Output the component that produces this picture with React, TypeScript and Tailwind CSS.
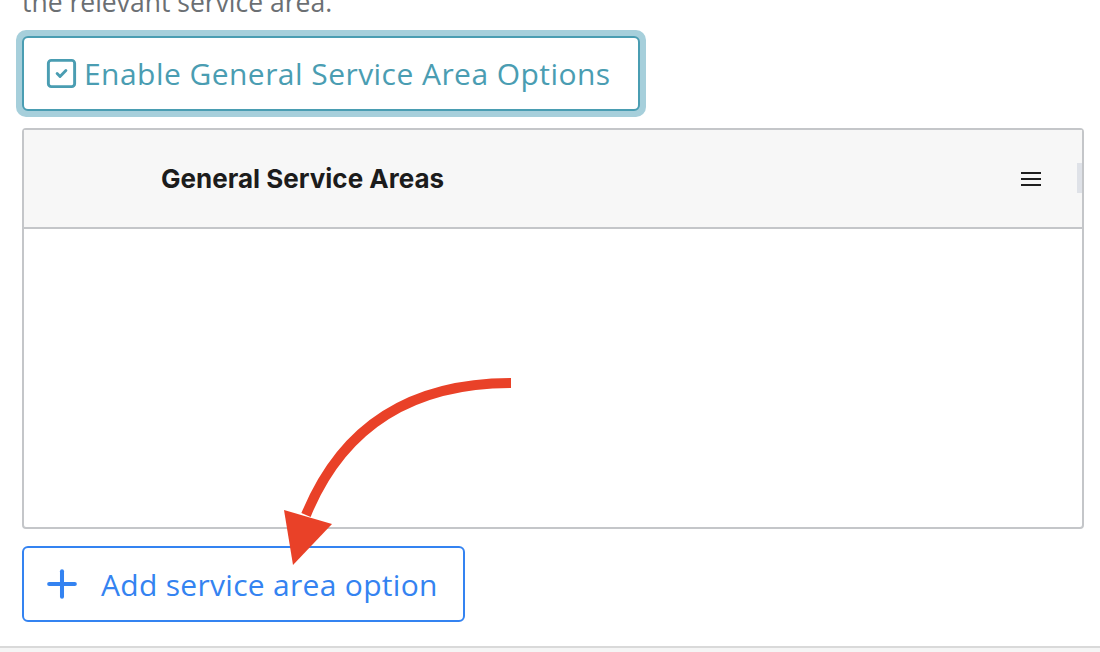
import { Plus, SquareCheck } from 'lucide-react'

const body = { fontFamily: '"Open Sans", "Lato", sans-serif' }
const heading = { fontFamily: 'Inter, Roboto, sans-serif' }

function MenuIcon() {
  return (
    <svg width="20" height="14" viewBox="0 0 20 14" className="text-[#1f1f1f]">
      <rect x="0" y="0" width="20" height="2" fill="currentColor" />
      <rect x="0" y="6" width="20" height="2" fill="currentColor" />
      <rect x="0" y="12" width="20" height="2" fill="currentColor" />
    </svg>
  )
}

// hand-drawn pointer towards the add button
function CurvedArrow() {
  return (
    <svg className="pointer-events-none absolute left-0 top-0" width="1100" height="652" viewBox="0 0 1100 652">
      <path d="M511,383 Q360,383 306,515" fill="none" stroke="#e94128" strokeWidth="10" />
      <polygon points="284,510 332,524 293,565" fill="#e94128" />
    </svg>
  )
}

export default function App() {
  return (
    <div className="relative h-[652px] w-[1100px] overflow-hidden bg-white" style={body}>
      <div className="flex h-[646px] flex-col pl-[22px] pr-[16px]">
        <p className="-mt-[18px] text-[26.5px] leading-[40px] text-[#6b6f73]">the relevant service area.</p>

        <div className="-ml-[6px] mt-[8px] self-start rounded-[10px] bg-[#a6cfdb] p-[6px]">
          <button className="flex h-[75px] w-[618px] items-center gap-[5px] rounded-[6px] border-2 border-[#4a9db2] bg-white pl-[20px] text-[30px] tracking-[0.45px] text-[#4a9db2]">
            <SquareCheck size={35} strokeWidth={2} />
            <span>Enable General Service Area Options</span>
          </button>
        </div>

        <div className="mt-[11px] flex h-[401px] flex-col rounded-[4px] border-2 border-[#c4c6c9]">
          <div className="flex h-[99px] items-center border-b-2 border-[#c4c6c9] bg-[#f7f7f7] pl-[137px]">
            <h2 className="flex-1 text-[26px] font-bold text-[#1c1c1c]" style={heading}>
              General Service Areas
            </h2>
            <MenuIcon />
            <div className="ml-[36px] mt-[33px] h-[30px] w-[5px] self-start bg-[#dfe2e8]" />
          </div>
          <div className="flex-1" />
        </div>

        <button className="mt-[17px] flex h-[76px] w-[443px] items-center gap-[17px] rounded-[6px] border-2 border-[#3483f1] pl-[16px] text-[30px] tracking-[0.3px] text-[#3483f1]">
          <Plus size={44} strokeWidth={2.2} />
          <span>Add service area option</span>
        </button>
      </div>
      <div className="h-[6px] border-t-2 border-[#d9d9d9] bg-[#f5f5f5]" />
      <CurvedArrow />
    </div>
  )
}
